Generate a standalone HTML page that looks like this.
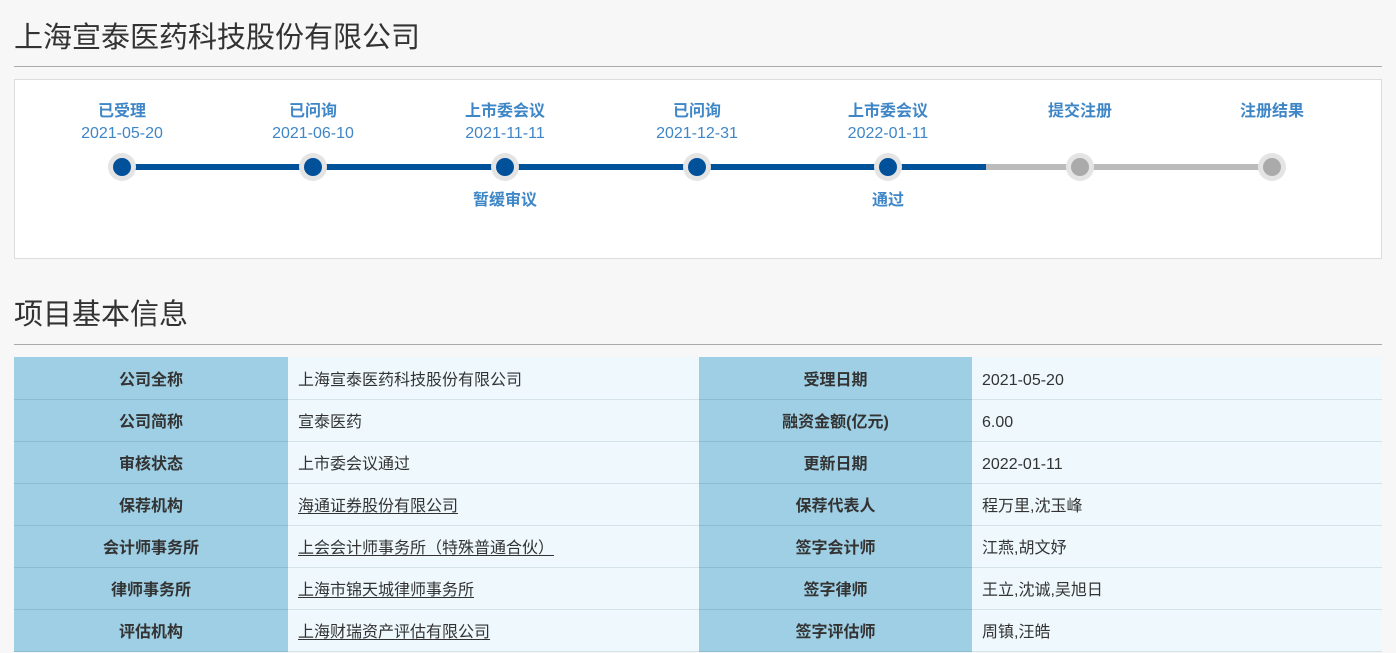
<!DOCTYPE html>
<html><head><meta charset="utf-8"><style>
body{margin:0;background:#f7f7f7;font-family:"Liberation Sans","Noto Sans CJK SC",sans-serif;width:1396px;height:653px;overflow:hidden;position:relative}
h1{position:absolute;left:14px;margin:0;font-weight:normal;font-size:29px;color:#333;line-height:1}
.hr{position:absolute;left:14px;width:1368px;height:1px;background:#aaa}
.box{position:absolute;left:14px;top:79px;width:1366px;height:178px;background:#fff;border:1px solid #ddd}
.st{position:absolute;width:160px;text-align:center;color:#3f86c7}
.st b{display:block;font-size:16px;line-height:20px}
.st span{display:block;font-size:16px;line-height:24px}
.dot{position:absolute;top:153px;width:28px;height:28px;border-radius:50%;background:#e4e4e4}
.dot i{position:absolute;left:5px;top:5px;width:18px;height:18px;border-radius:50%;background:#00509a}
.dot.g i{background:#aaa}
table{position:absolute;left:14px;top:357px;width:1368px;border-collapse:collapse;font-size:16px;color:#333;table-layout:fixed}
td{height:42px;border-bottom:1px solid #d4e3ea;padding:6px 0 0;line-height:20px;vertical-align:middle;box-sizing:border-box}
td span{display:inline-block;height:22px;line-height:22px;vertical-align:middle}
td.l{background:#9ecfe4;text-align:center;font-weight:bold;border-bottom-color:#8dbcd2}
td.v{background:#eef8fd;padding-left:10px}
u{text-underline-offset:2px}
</style></head><body>
<h1 style="top:24px">上海宣泰医药科技股份有限公司</h1>
<div class="hr" style="top:66px"></div>
<div class="box"></div>
<div style="position:absolute;left:122px;top:164px;width:766px;height:6px;background:#00509a"></div>
<div style="position:absolute;left:888px;top:164px;width:384px;height:6px;background:#bbb"></div>
<div style="position:absolute;left:888px;top:164px;width:98px;height:6px;background:#00509a"></div>
<div class="dot" style="left:108px"><i></i></div>
<div class="dot" style="left:299px"><i></i></div>
<div class="dot" style="left:491px"><i></i></div>
<div class="dot" style="left:683px"><i></i></div>
<div class="dot" style="left:874px"><i></i></div>
<div class="dot g" style="left:1066px"><i></i></div>
<div class="dot g" style="left:1258px"><i></i></div>
<div class="st" style="left:42px;top:102px"><b>已受理</b><span>2021-05-20</span></div>
<div class="st" style="left:233px;top:102px"><b>已问询</b><span>2021-06-10</span></div>
<div class="st" style="left:425px;top:102px"><b>上市委会议</b><span>2021-11-11</span></div>
<div class="st" style="left:617px;top:102px"><b>已问询</b><span>2021-12-31</span></div>
<div class="st" style="left:808px;top:102px"><b>上市委会议</b><span>2022-01-11</span></div>
<div class="st" style="left:1000px;top:102px"><b>提交注册</b></div>
<div class="st" style="left:1192px;top:102px"><b>注册结果</b></div>
<div class="st" style="left:425px;top:191px"><b>暂缓审议</b></div>
<div class="st" style="left:808px;top:191px"><b>通过</b></div>
<h1 style="top:301px">项目基本信息</h1>
<div class="hr" style="top:344px"></div>
<table>
<colgroup><col style="width:274px"><col style="width:411px"><col style="width:273px"><col style="width:410px"></colgroup>
<tr><td class="l">公司全称</td><td class="v">上海宣泰医药科技股份有限公司</td><td class="l">受理日期</td><td class="v"><span>2021-05-20</span></td></tr>
<tr><td class="l">公司简称</td><td class="v">宣泰医药</td><td class="l">融资金额(亿元)</td><td class="v"><span>6.00</span></td></tr>
<tr><td class="l">审核状态</td><td class="v">上市委会议通过</td><td class="l">更新日期</td><td class="v"><span>2022-01-11</span></td></tr>
<tr><td class="l">保荐机构</td><td class="v"><u>海通证券股份有限公司</u></td><td class="l">保荐代表人</td><td class="v">程万里,沈玉峰</td></tr>
<tr><td class="l">会计师事务所</td><td class="v"><u>上会会计师事务所（特殊普通合伙）</u></td><td class="l">签字会计师</td><td class="v">江燕,胡文妤</td></tr>
<tr><td class="l">律师事务所</td><td class="v"><u>上海市锦天城律师事务所</u></td><td class="l">签字律师</td><td class="v">王立,沈诚,吴旭日</td></tr>
<tr><td class="l">评估机构</td><td class="v"><u>上海财瑞资产评估有限公司</u></td><td class="l">签字评估师</td><td class="v">周镇,汪皓</td></tr>
</table>
</body></html>
